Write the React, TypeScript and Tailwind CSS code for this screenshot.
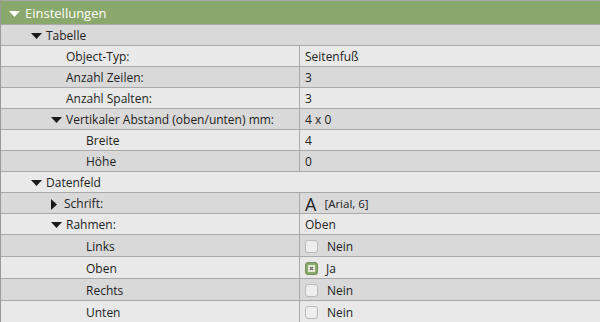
import React from "react";

type Row = {
  label: string;
  level: number;
  arrow?: "down" | "right";
  value?: React.ReactNode;
  section?: boolean;
  tall?: boolean;
};

const Arrow = ({ dir, white }: { dir: "down" | "right"; white?: boolean }) =>
  dir === "down" ? (
    <svg width="11" height="6" viewBox="0 0 11 6" className="shrink-0">
      <path d="M0 0 H11 L5.5 6 Z" fill={white ? "#ffffff" : "#1a1a1a"} />
    </svg>
  ) : (
    <svg width="6" height="11" viewBox="0 0 6 11" className="shrink-0">
      <path d="M0 0 V11 L6 5.5 Z" fill="#1a1a1a" />
    </svg>
  );

const Check = ({ checked, text }: { checked?: boolean; text: string }) => (
  <div className="flex items-center">
    {checked ? (
      <div className="w-[13px] h-[13px] rounded-[3px] border border-[#6f8f55] bg-[#8aaa6c] flex items-center justify-center">
        <svg width="7" height="7" viewBox="0 0 7 7">
          <rect width="7" height="7" fill="#e6eddf" />
          <path d="M2 2 L5 5 M5 2 L2 5" stroke="#707070" strokeWidth="1.2" />
        </svg>
      </div>
    ) : (
      <div className="w-[13px] h-[13px] rounded-[3px] border border-[#b9b9b9] bg-[#eeeeee]" />
    )}
    <span className={checked ? "ml-[8px]" : "ml-[9px]"}>{text}</span>
  </div>
);

const rows: Row[] = [
  { label: "Tabelle", level: 1, arrow: "down", section: true },
  { label: "Object-Typ:", level: 2, value: "Seitenfuß" },
  { label: "Anzahl Zeilen:", level: 2, value: "3" },
  { label: "Anzahl Spalten:", level: 2, value: "3" },
  { label: "Vertikaler Abstand (oben/unten) mm:", level: 2, arrow: "down", value: "4 x 0" },
  { label: "Breite", level: 3, value: "4" },
  { label: "Höhe", level: 3, value: "0" },
  { label: "Datenfeld", level: 1, arrow: "down", section: true },
  {
    label: "Schrift:",
    level: 2,
    arrow: "right",
    value: (
      <div className="flex items-center">
        <span className="text-[18px] leading-none">A</span>
        <span className="ml-[8px] text-[11.5px]">[Arial, 6]</span>
      </div>
    ),
  },
  { label: "Rahmen:", level: 2, arrow: "down", value: "Oben" },
  { label: "Links", level: 3, tall: true, value: <Check text="Nein" /> },
  { label: "Oben", level: 3, tall: true, value: <Check checked text="Ja" /> },
  { label: "Rechts", level: 3, tall: true, value: <Check text="Nein" /> },
  { label: "Unten", level: 3, tall: true, value: <Check text="Nein" /> },
];

const indent: Record<number, string> = {
  1: "pl-[30px]",
  2: "pl-[50px]",
  3: "pl-[85px]",
};

export default function App() {
  return (
    <div
      className="w-[600px] h-[322px] overflow-hidden bg-[#e9e9e9] text-[12px] text-[#222222] border-l border-[#9a9a9a]"
      style={{ fontFamily: '"Open Sans", "Noto Sans", sans-serif' }}
    >
      <div className="h-[25px] border-y border-[#a9a9a9] bg-[#89a86b] flex items-center pl-[8px] pt-[2px] text-white text-[13px]">
        <Arrow dir="down" white />
        <span className="ml-[5px]">Einstellungen</span>
      </div>
      {rows.map((row, i) => {
        const bg = i % 2 === 0 ? "bg-[#d9d9d9]" : "bg-[#e9e9e9]";
        const h = row.tall ? "h-[22px]" : "h-[21px]";
        if (row.section) {
          return (
            <div
              key={i}
              className={`${h} ${bg} border-b border-[#a9a9a9] flex items-center pt-[2px] ${indent[row.level]}`}
            >
              <Arrow dir="down" />
              <span className="ml-[4px]">{row.label}</span>
            </div>
          );
        }
        return (
          <div key={i} className={`${h} ${bg} border-b border-[#a9a9a9] flex pt-[2px]`}>
            <div
              className={`w-[299px] border-r border-[#a9a9a9] -mt-[2px] pt-[2px] flex items-center ${
                row.arrow ? indent[row.level] : row.level === 2 ? "pl-[65px]" : "pl-[85px]"
              }`}
            >
              {row.arrow && <Arrow dir={row.arrow} />}
              <span className={row.arrow === "right" ? "ml-[7px]" : row.arrow ? "ml-[4px]" : ""}>
                {row.label}
              </span>
            </div>
            <div className="flex-1 flex items-center pl-[5px]">{row.value}</div>
          </div>
        );
      })}
    </div>
  );
}
